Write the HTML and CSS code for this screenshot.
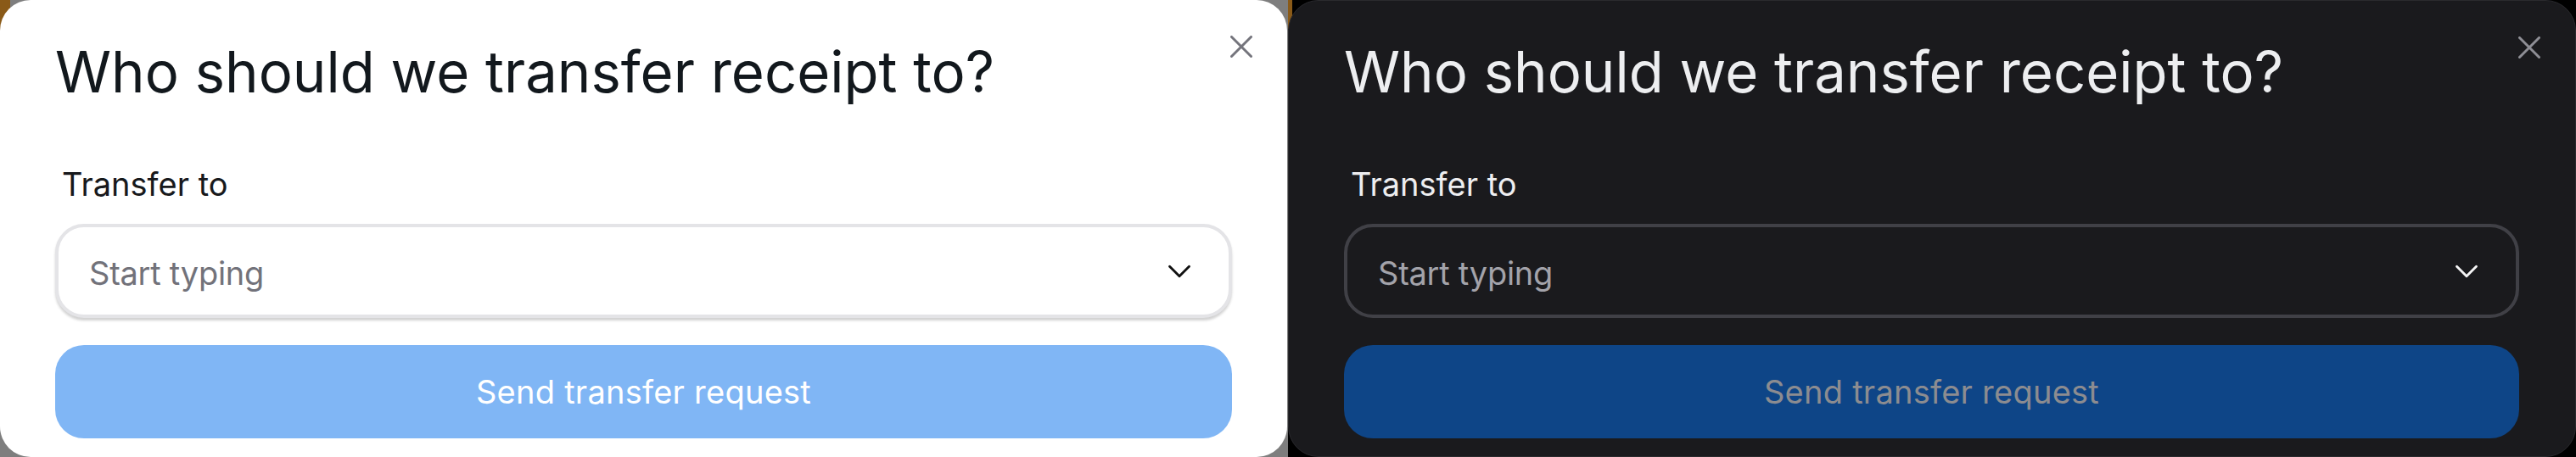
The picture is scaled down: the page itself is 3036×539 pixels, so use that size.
FILE: index.html
```html
<!DOCTYPE html>
<html lang="en">
<head>
<meta charset="utf-8">
<title>Transfer receipt</title>
<link rel="stylesheet" href="styles.css">
</head>
<body>
  <div class="scene scene-light">
    <section class="dialog light">
      <button class="close" aria-label="Close">
        <svg viewBox="0 0 26 26" width="26" height="26"><path d="M1.5 1.5L24.5 24.5M24.5 1.5L1.5 24.5" /></svg>
      </button>
      <h1 class="title">Who should we transfer receipt to?</h1>
      <label class="label">Transfer to</label>
      <div class="select">
        <span class="placeholder">Start typing</span>
        <svg class="chevron" viewBox="0 0 24 24" width="46" height="46"><path d="M6 9l6 6 6-6" /></svg>
      </div>
      <button class="submit">Send transfer request</button>
    </section>
  </div>
  <div class="scene scene-dark">
    <section class="dialog dark">
      <button class="close" aria-label="Close">
        <svg viewBox="0 0 26 26" width="26" height="26"><path d="M1.5 1.5L24.5 24.5M24.5 1.5L1.5 24.5" /></svg>
      </button>
      <h1 class="title">Who should we transfer receipt to?</h1>
      <label class="label">Transfer to</label>
      <div class="select">
        <span class="placeholder">Start typing</span>
        <svg class="chevron" viewBox="0 0 24 24" width="46" height="46"><path d="M6 9l6 6 6-6" /></svg>
      </div>
      <button class="submit">Send transfer request</button>
    </section>
  </div>
</body>
</html>
```

FILE: styles.css
```css
* { box-sizing: border-box; }

html, body {
  margin: 0;
  padding: 0;
}

body {
  width: 3036px;
  height: 539px;
  overflow: hidden;
  display: flex;
  font-family: Inter, "Noto Sans", sans-serif;
}

.scene {
  width: 1518px;
  height: 539px;
  flex: none;
}

.scene-light {
  background:
    linear-gradient(to right, #8a5a18 0, #8a5a18 12px, transparent 12px) top left / 100% 36px no-repeat,
    #7e7e7e;
}

.scene-dark {
  background:
    linear-gradient(to right, #8a5a18 0, #8a5a18 5px, transparent 5px) top left / 100% 34px no-repeat,
    #000;
}

.dialog {
  position: relative;
  height: 539px;
  border-radius: 36px;
  padding: 45px 65px 22px 65px;
  display: flex;
  flex-direction: column;
}

.dialog.light {
  width: 1517px;
  background: #ffffff;
}

.dialog.dark {
  width: 1518px;
  background: #1a1a1d;
  border: 1px solid #2a2a2e;
  padding: 44px 66px 21px 65px;
}

.close {
  position: absolute;
  top: 42px;
  right: 41px;
  width: 26px;
  height: 26px;
  padding: 0;
  border: 0;
  background: transparent;
  display: block;
}

.close svg {
  display: block;
  fill: none;
  stroke-width: 3;
  stroke-linecap: round;
}

.light .close svg { stroke: #74747c; }
.dark .close svg { stroke: #8e8e95; }

.title {
  margin: 0;
  font-size: 67px;
  line-height: 80px;
  font-weight: 400;
  letter-spacing: 0;
}

.light .title { color: #12181d; }
.dark .title { color: #edeef0; }

.label {
  display: block;
  margin-top: 69px;
  padding-left: 8px;
  font-size: 38px;
  line-height: 46px;
  font-weight: 400;
}

.light .label { color: #17191c; }
.dark .label { color: #eeeef0; }

.select {
  margin-top: 24px;
  height: 111px;
  border-radius: 34px;
  border: 4px solid;
  display: flex;
  align-items: center;
  justify-content: space-between;
  padding: 0 35px 0 36px;
}

.light .select {
  border-color: #e4e4e7;
  background: #ffffff;
  box-shadow: 0 3px 3px rgba(0, 0, 0, 0.18);
}

.dark .select {
  border-color: #404046;
  background: #1a1a1d;
}

.placeholder {
  font-size: 38px;
  line-height: 46px;
  margin-top: 5px;
  letter-spacing: -0.25px;
}

.light .placeholder { color: #72727a; }
.dark .placeholder { color: #a3a3aa; }

.chevron {
  display: block;
  fill: none;
  stroke-width: 1.5;
  stroke-linecap: round;
  stroke-linejoin: round;
}

.light .chevron { stroke: #111111; }
.dark .chevron { stroke: #f4f4f5; }

.submit {
  margin-top: 32px;
  height: 110px;
  width: 100%;
  border: 0;
  border-radius: 34px;
  font-family: Inter, "Noto Sans", sans-serif;
  font-size: 38px;
  line-height: 46px;
  font-weight: 400;
  letter-spacing: 0.25px;
  padding: 0;
}

.light .submit {
  background: #80b6f5;
  color: #ffffff;
}

.dark .submit {
  background: #0e4587;
  color: #8c8c90;
}
```
